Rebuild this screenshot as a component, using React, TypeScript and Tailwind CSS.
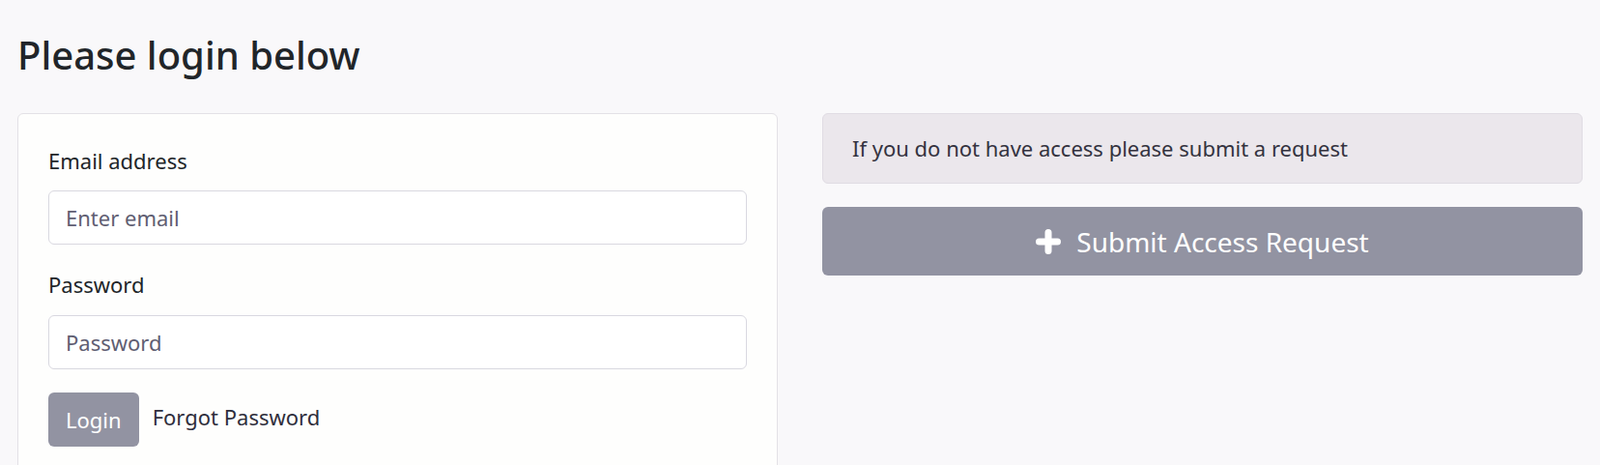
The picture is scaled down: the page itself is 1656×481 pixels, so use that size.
export default function App() {
  return (
    <div className="min-h-screen bg-[#f9f8fa] px-[18px] pt-[33px] font-['Noto_Sans',sans-serif] text-[#212529]">
      <h1 className="text-[40px] leading-[48px] font-medium mb-[36px]">Please login below</h1>
      <div className="grid grid-cols-2 gap-[46px] items-start">
        <LoginCard />
        <AccessBlock />
      </div>
    </div>
  );
}

function LoginCard() {
  return (
    <div className="bg-[#fefefd] border border-[#e3e1e6] rounded-[6px] px-[31px] pt-[32px] pb-[40px]">
      <label className="block text-[22px] leading-[33px] mb-[14px]">Email address</label>
      <input
        type="email"
        placeholder="Enter email"
        className="block w-full h-[56px] px-[17px] text-[22px] bg-white border border-[#d9d8e0] rounded-[6px] placeholder:text-[#5f5e72] outline-none"
      />
      <label className="block text-[22px] leading-[33px] mt-[25px] mb-[15px]">Password</label>
      <input
        type="password"
        placeholder="Password"
        className="block w-full h-[56px] px-[17px] text-[22px] bg-white border border-[#d9d8e0] rounded-[6px] placeholder:text-[#5f5e72] outline-none"
      />
      <div className="flex items-start gap-[14px] mt-[24px]">
        <button className="h-[56px] px-[18px] text-[22px] text-white bg-[#9293a2] rounded-[6px]">Login</button>
        <a className="text-[22px] leading-[33px] text-[#2f2e3c] mt-[9px]">Forgot Password</a>
      </div>
    </div>
  );
}

function PlusIcon() {
  return (
    <svg width="26" height="26" viewBox="0 0 26 26" fill="none">
      <path d="M13 3.5v19M3.5 13h19" stroke="white" strokeWidth="7" strokeLinecap="round" />
    </svg>
  );
}

function AccessBlock() {
  return (
    <div className="flex flex-col gap-[24px]">
      <div className="bg-[#ebe7ec] border border-[#e0dce3] rounded-[6px] px-[30px] py-[19px] text-[22px] leading-[33px] text-[#34333f]">
        If you do not have access please submit a request
      </div>
      <button className="h-[71px] flex items-center justify-center gap-[16px] bg-[#9293a2] rounded-[6px] text-white text-[28px]">
        <PlusIcon />
        <span>Submit Access Request</span>
      </button>
    </div>
  );
}
